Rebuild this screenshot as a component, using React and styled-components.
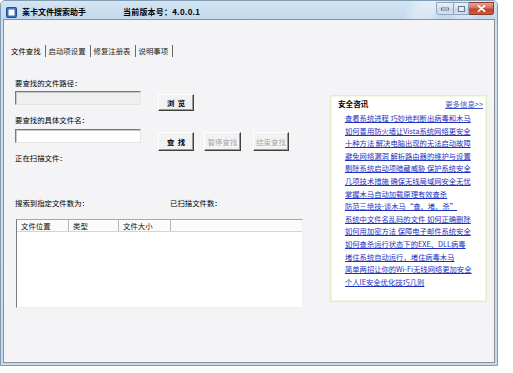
import React from "react";
import styled, { createGlobalStyle } from "styled-components";

const Global = createGlobalStyle`
  html, body { margin: 0; padding: 0; background: #ffffff; }
  body { font-family: "Noto Sans CJK SC", "Noto Sans", sans-serif; }
`;

const FONT = `"Noto Sans CJK SC", "Noto Sans", sans-serif`;

const Window = styled.div`
  box-sizing: border-box;
  width: 498px;
  height: 366px;
  border: 1px solid #7f9cb3;
  border-radius: 5px 5px 0 0;
  background: linear-gradient(to bottom, #c3d9ec, #cfe1f0 30px, #c5dbee);
  display: flex;
  flex-direction: column;
  font-family: ${FONT};
  color: #000;
`;

const TitleBar = styled.div`
  box-sizing: border-box;
  height: 18px;
  padding: 4px 3px 0 5px;
  display: flex;
  align-items: center;
  border-radius: 4px 4px 0 0;
  background:
    linear-gradient(115deg, transparent 0 370px, rgba(255,255,255,0.35) 380px 395px, transparent 405px 415px, rgba(255,255,255,0.3) 420px 430px, transparent 440px),
    linear-gradient(to bottom, #d4e5f3, #c2d8ec);
`;

const AppIcon = styled.svg`
  width: 11px;
  height: 11px;
  flex: none;
`;

const CaptionText = styled.span`
  font-size: 8px;
  line-height: 10px;
  font-weight: 700;
  white-space: nowrap;
  margin-left: ${(p) => p.$offset}px;
  letter-spacing: ${(p) => p.$spacing || 0}px;
`;

const CaptionButtons = styled.div`
  margin-left: auto;
  align-self: flex-start;
  margin-top: -3px;
  display: flex;
`;

const CapButton = styled.div`
  box-sizing: border-box;
  width: ${(p) => p.$w}px;
  height: 13px;
  display: flex;
  align-items: center;
  justify-content: center;
  border: 1px solid ${(p) => (p.$close ? "#8a3a2c" : "#8ea5bc")};
  border-left-width: ${(p) => (p.$first ? 1 : 0)}px;
  border-radius: ${(p) => (p.$first ? "0 0 0 3px" : p.$close ? "0 0 3px 0" : "0")};
  background: ${(p) =>
    p.$close
      ? "linear-gradient(to bottom, #e7a293, #d9705d 45%, #c2412a 55%, #d2573f)"
      : "linear-gradient(to bottom, #e8f0f8, #d6e3ef 45%, #c6d6e6 55%, #d3e1ee)"};
`;

const Client = styled.div`
  flex: 1;
  margin: 0 2px 2px 2px;
  border: 1px solid #8c9199;
  background: #f4f4f6;
  display: flex;
  flex-direction: column;
`;

const TabBar = styled.div`
  display: flex;
  margin-top: 25px;
  padding-left: 4px;
`;

const Tab = styled.div`
  height: 12px;
  line-height: 12px;
  padding: 0 4px 0 3px;
  font-size: 7.4px;
  white-space: nowrap;
  border-right: 1px solid #6a6a6a;
  color: ${(p) => (p.$active ? "#000" : "#222")};
`;

const Body = styled.div`
  display: flex;
  align-items: flex-start;
  padding-left: 11px;
`;

const LeftColumn = styled.div`
  width: 288px;
  margin-top: 21px;
  display: flex;
  flex-direction: column;
`;

const FieldLabel = styled.div`
  font-size: 7.4px;
  line-height: 10px;
  height: 10px;
  white-space: nowrap;
  margin-top: ${(p) => p.$top || 0}px;
`;

const FieldRow = styled.div`
  display: flex;
  align-items: flex-start;
  margin-top: ${(p) => p.$top || 0}px;
`;

const TextInput = styled.div`
  box-sizing: border-box;
  width: 126px;
  height: 14px;
  border-top: 1px solid #7a7a7a;
  border-left: 1px solid #7a7a7a;
  border-right: 1px solid #e4e4e4;
  border-bottom: 1px solid #e4e4e4;
  box-shadow: inset 1px 1px 0 #c8c8c8;
  background: ${(p) => (p.$disabled ? "#efefef" : "#ffffff")};
`;

const Button = styled.div`
  box-sizing: border-box;
  width: ${(p) => p.$w}px;
  height: ${(p) => p.$h}px;
  margin-top: ${(p) => p.$top}px;
  margin-left: ${(p) => p.$left}px;
  display: flex;
  align-items: center;
  justify-content: center;
  font-size: 7.4px;
  white-space: pre;
  background: #f2f2f2;
  border-top: 1px solid #ffffff;
  border-left: 1px solid #ffffff;
  border-right: 1px solid #404040;
  border-bottom: 1px solid #404040;
  box-shadow: inset -1px -1px 0 #9a9a9a;
  font-weight: ${(p) => (p.$disabled ? 400 : 700)};
  color: ${(p) => (p.$disabled ? "#a4a4a4" : "#000")};
  text-shadow: ${(p) => (p.$disabled ? "1px 1px 0 #ffffff" : "none")};
`;

const CountsRow = styled.div`
  display: flex;
  margin-top: 35px;
  font-size: 7.4px;
  line-height: 10px;
  white-space: nowrap;
`;

const CountLabel = styled.span`
  width: ${(p) => p.$w || "auto"};
`;

const ListView = styled.div`
  box-sizing: border-box;
  margin-top: 11px;
  margin-left: 1px;
  width: 287px;
  height: 89px;
  background: #ffffff;
  border-top: 1px solid #a8a8a8;
  border-left: 1px solid #7c7c7c;
  border-right: 1px solid #f0f0f0;
  border-bottom: 1px solid #f0f0f0;
`;

const ListHeader = styled.div`
  display: flex;
  height: 11px;
  border-bottom: 1px solid #d4d4d4;
  background: #fbfbfb;
`;

const HeaderCell = styled.div`
  box-sizing: border-box;
  width: ${(p) => p.$w}px;
  padding-left: 4px;
  font-size: 7.4px;
  line-height: 11px;
  white-space: nowrap;
  border-right: 1px solid #b8b8b8;
  color: #111;
`;

const NewsPanel = styled.div`
  box-sizing: border-box;
  width: 157px;
  height: 207px;
  margin-top: 38px;
  margin-left: 27px;
  background: #ffffff;
  border: 1px solid #e3edc4;
  box-shadow: inset 0 0 0 1px #f3f8e2;
  padding: 1px 3px 0 7px;
`;

const NewsHeader = styled.div`
  display: flex;
  justify-content: space-between;
  align-items: center;
  height: 12px;
  margin-top: 1px;
`;

const NewsTitle = styled.span`
  font-size: 7.6px;
  font-weight: 700;
  line-height: 12px;
`;

const MoreLink = styled.a`
  font-size: 7.4px;
  line-height: 12px;
  color: #3a55c4;
  text-decoration: underline;
  white-space: nowrap;
`;

const NewsList = styled.ul`
  list-style: none;
  margin: 2px 0 0 0;
  padding: 0 0 0 7px;
`;

const NewsItem = styled.li`
  height: 12.6px;
  line-height: 12.6px;
  font-size: 7.3px;
  white-space: nowrap;
  a {
    color: #1d2fc0;
    text-decoration: underline;
  }
`;

const news = [
  "查看系统进程 巧妙地判断出病毒和木马",
  "如何善用防火墙让Vista系统网络更安全",
  "十种方法 解决电脑出现的无法启动故障",
  "避免网络漏洞 解析路由器的维护与设置",
  "剔除系统启动项暗藏威胁 保护系统安全",
  "几项技术措施 确保无线局域网安全无忧",
  "掌握木马自动加载原理有效查杀",
  "防范三绝技-谈木马“查、堵、杀”",
  "系统中文件名乱码的文件 如何正确删除",
  "如何用加密方法 保障电子邮件系统安全",
  "如何查杀运行状态下的EXE、DLL病毒",
  "堵住系统自动运行，堵住病毒木马",
  "简单两招让你的Wi-Fi无线网络更加安全",
  "个人IE安全优化技巧几则",
];

export default function App() {
  return (
    <>
      <Global />
      <Window>
        <TitleBar>
          <AppIcon viewBox="0 0 11 11">
            <rect x="0.5" y="0.5" width="10" height="10" rx="1" fill="#2f6fc4" stroke="#1d4f96" />
            <rect x="2.5" y="3" width="6" height="5.5" fill="#ffffff" />
            <rect x="2.5" y="1.8" width="6" height="1" fill="#9cc4ee" />
          </AppIcon>
          <CaptionText $offset={5}>莱卡文件搜索助手</CaptionText>
          <CaptionText $offset={37} $spacing={0.2}>
            当前版本号：4.0.0.1
          </CaptionText>
          <CaptionButtons>
            <CapButton $w={18} $first>
              <svg width="8" height="4" viewBox="0 0 8 4">
                <rect x="0.5" y="1" width="7" height="2" fill="#ffffff" stroke="#4a5a6c" strokeWidth="0.8" />
              </svg>
            </CapButton>
            <CapButton $w={15}>
              <svg width="7" height="6" viewBox="0 0 7 6">
                <rect x="0.5" y="0.5" width="6" height="5" fill="none" stroke="#6c7c8e" strokeWidth="1" />
                <rect x="1.5" y="1.5" width="4" height="3" fill="#e9eff6" />
              </svg>
            </CapButton>
            <CapButton $w={25} $close>
              <svg width="9" height="7" viewBox="0 0 9 7">
                <path d="M1.5 0.8 L7.5 6.2 M7.5 0.8 L1.5 6.2" stroke="#ffffff" strokeWidth="1.8" strokeLinecap="round" />
              </svg>
            </CapButton>
          </CaptionButtons>
        </TitleBar>
        <Client>
          <TabBar>
            <Tab $active>文件查找</Tab>
            <Tab>启动项设置</Tab>
            <Tab>修复注册表</Tab>
            <Tab>说明事项</Tab>
          </TabBar>
          <Body>
            <LeftColumn>
              <FieldLabel>要查找的文件路径：</FieldLabel>
              <FieldRow $top={3}>
                <TextInput $disabled />
                <Button $w={36} $h={17} $top={3} $left={17}>
                  {"浏  览"}
                </Button>
              </FieldRow>
              <FieldLabel $top={4}>要查找的具体文件名：</FieldLabel>
              <FieldRow $top={4}>
                <TextInput />
                <Button $w={36} $h={19} $top={3} $left={17}>
                  {"查  找"}
                </Button>
                <Button $w={37} $h={19} $top={3} $left={10} $disabled>
                  暂停查找
                </Button>
                <Button $w={36} $h={19} $top={3} $left={12} $disabled>
                  结束查找
                </Button>
              </FieldRow>
              <FieldLabel $top={2}>正在扫描文件：</FieldLabel>
              <CountsRow>
                <CountLabel $w="155px">搜索到指定文件数为：</CountLabel>
                <CountLabel>已扫描文件数：</CountLabel>
              </CountsRow>
              <ListView>
                <ListHeader>
                  <HeaderCell $w={52}>文件位置</HeaderCell>
                  <HeaderCell $w={50}>类型</HeaderCell>
                  <HeaderCell $w={52}>文件大小</HeaderCell>
                </ListHeader>
              </ListView>
            </LeftColumn>
            <NewsPanel>
              <NewsHeader>
                <NewsTitle>安全咨讯</NewsTitle>
                <MoreLink>更多信息&gt;&gt;</MoreLink>
              </NewsHeader>
              <NewsList>
                {news.map((t) => (
                  <NewsItem key={t}>
                    <a>{t}</a>
                  </NewsItem>
                ))}
              </NewsList>
            </NewsPanel>
          </Body>
        </Client>
      </Window>
    </>
  );
}
